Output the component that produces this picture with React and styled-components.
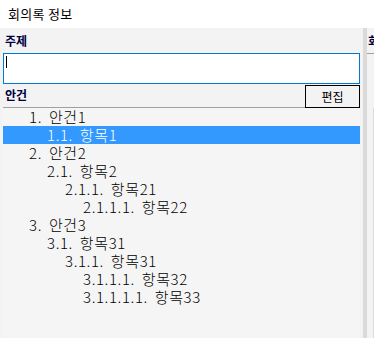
import * as React from 'react'
import styled, { createGlobalStyle } from 'styled-components'

const agenda = [
  { label: '1. 안건1', level: 0 },
  { label: '1.1. 항목1', level: 1, selected: true },
  { label: '2. 안건2', level: 0 },
  { label: '2.1. 항목2', level: 1 },
  { label: '2.1.1. 항목21', level: 2 },
  { label: '2.1.1.1. 항목22', level: 3 },
  { label: '3. 안건3', level: 0 },
  { label: '3.1. 항목31', level: 1 },
  { label: '3.1.1. 항목31', level: 2 },
  { label: '3.1.1.1. 항목32', level: 3 },
  { label: '3.1.1.1.1. 항목33', level: 3 },
]

const App = () => {
  return (
    <>
      <GlobalStyle />
      <Root>
        <TitleBar>회의록 정보</TitleBar>
        <Body>
          <LeftPanel>
            <FieldLabel>주제</FieldLabel>
            <TextBox>
              <Caret />
            </TextBox>
            <HeaderRow>
              <FieldLabel as='span'>안건</FieldLabel>
              <EditButton>편집</EditButton>
            </HeaderRow>
            <Tree>
              {agenda.map((item) => (
                <TreeRow key={item.label} level={item.level} selected={item.selected}>
                  {item.label}
                </TreeRow>
              ))}
            </Tree>
          </LeftPanel>
          <Splitter />
          <RightPanel>
            <RightHeader>회의 일시</RightHeader>
            <RightBox />
          </RightPanel>
        </Body>
      </Root>
    </>
  )
}

const GlobalStyle = createGlobalStyle`
  html, body {
    margin: 0;
    padding: 0;
    background: #ffffff;
  }
  body {
    font-family: "Noto Sans CJK KR", "Noto Sans", sans-serif;
  }
`

const Root = styled.div`
  width: 374px;
  height: 338px;
  display: flex;
  flex-direction: column;
  overflow: hidden;
`

const TitleBar = styled.div`
  height: 28px;
  flex: none;
  display: flex;
  align-items: center;
  padding-left: 8px;
  padding-bottom: 2px;
  box-sizing: border-box;
  font-size: 13px;
  letter-spacing: 0.3px;
  color: #000000;
  background: #ffffff;
`

const Body = styled.div`
  flex: 1;
  display: flex;
  background: #f3f3f3;
  min-height: 0;
`

const LeftPanel = styled.div`
  width: 363px;
  flex: none;
  display: flex;
  flex-direction: column;
  padding: 0 3px;
  box-sizing: border-box;
`

const FieldLabel = styled.div`
  height: 25px;
  display: flex;
  align-items: center;
  padding-left: 2px;
  font-size: 12px;
  font-weight: bold;
  color: #000040;
`

const TextBox = styled.div`
  height: 31px;
  box-sizing: border-box;
  border: 1px solid #0078d7;
  background: #ffffff;
  padding: 2px 0 0 2px;
`

const Caret = styled.span`
  display: block;
  width: 1px;
  height: 12px;
  background: #000000;
`

const HeaderRow = styled.div`
  height: 24px;
  box-sizing: border-box;
  display: flex;
  align-items: flex-end;
  justify-content: space-between;
  border-bottom: 1px solid #a0a0a0;

  & > span {
    align-self: center;
    height: auto;
    margin-bottom: 2px;
  }
`

const EditButton = styled.button`
  width: 55px;
  height: 23px;
  margin-bottom: -1px;
  padding: 0;
  border: 1px solid #000000;
  background: #f3f3f3;
  font-family: "Noto Sans CJK KR", sans-serif;
  font-size: 12px;
  color: #000000;
`

const Tree = styled.div`
  flex: 1;
  background: #f5f5f5;
  display: flex;
  flex-direction: column;
`

const TreeRow = styled.div`
  height: 18px;
  box-sizing: border-box;
  line-height: 17px;
  padding-bottom: 1px;
  padding-left: ${({ level }) => 26 + level * 18}px;
  font-size: 15px;
  font-weight: 300;
  letter-spacing: 0.6px;
  word-spacing: 3px;
  white-space: nowrap;
  color: ${({ selected }) => (selected ? '#ffffff' : '#000000')};
  background: ${({ selected }) => (selected ? '#3399ff' : 'transparent')};
`

const Splitter = styled.div`
  width: 4px;
  flex: none;
  background: #dadada;
`

const RightPanel = styled.div`
  flex: 1;
  min-width: 0;
  overflow: hidden;
  display: flex;
  flex-direction: column;
`

const RightHeader = styled.div`
  height: 26px;
  box-sizing: border-box;
  display: flex;
  align-items: center;
  padding-left: 1px;
  white-space: nowrap;
  font-size: 12px;
  font-weight: bold;
  color: #000040;
  border-bottom: 1px solid #a0a0a0;
`

const RightBox = styled.div`
  flex: 1;
  margin: 54px 0 0 6px;
  border-left: 1px solid #dcdcdc;
  background: #f5f5f5;
`

export default App
